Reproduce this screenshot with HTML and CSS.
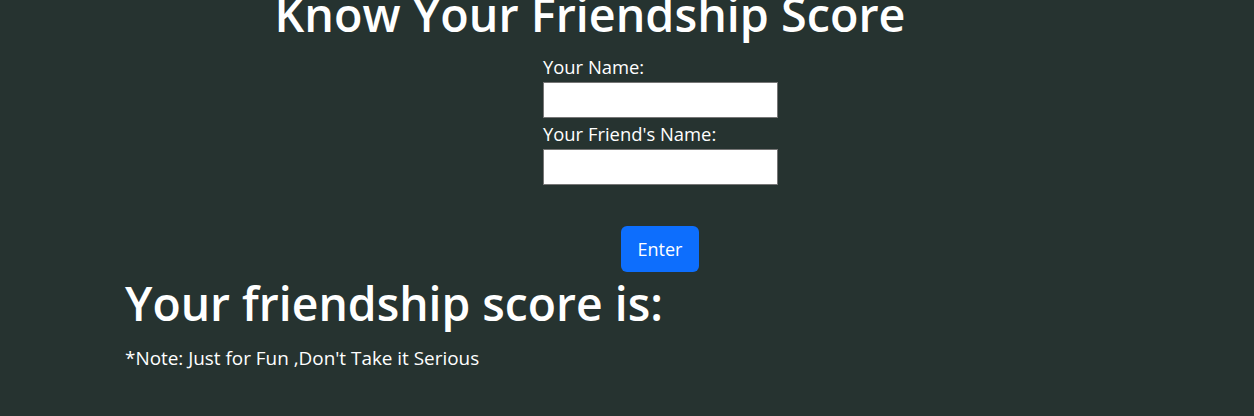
FILE: index.html
```html
<!DOCTYPE html>
<html>
<head>
<meta charset="utf-8">
<link rel="stylesheet" href="styles.css">
</head>
<body>
<div class="page">
  <h1 class="title">Know Your Friendship Score</h1>
  <form class="form">
    <label class="label" for="n1">Your Name:</label>
    <input class="field" id="n1" type="text">
    <label class="label" for="n2">Your Friend's Name:</label>
    <input class="field" id="n2" type="text">
    <div class="actions"><button class="btn" type="button">Enter</button></div>
  </form>
  <section class="result">
    <h2 class="score">Your friendship score is:</h2>
    <p class="note">*Note: Just for Fun ,Don't Take it Serious</p>
  </section>
</div>
</body>
</html>
```
FILE: styles.css
```css
html, body { margin: 0; padding: 0; }
body {
  background: #263330;
  color: #fff;
  font-family: "Open Sans", "Noto Sans", sans-serif;
  width: 1254px;
  height: 416px;
  overflow: hidden;
}
.page { display: flex; flex-direction: column; }
.title {
  margin: -14px 0 9px 0;
  width: 1180px;
  text-align: center;
  font-size: 46.7px;
  font-weight: 600;
  line-height: 56px;
}
.form {
  margin-left: 543px;
  width: 235px;
  display: flex;
  flex-direction: column;
}
.label { font-size: 18.4px; line-height: 31px; }
.field {
  box-sizing: border-box;
  width: 235px;
  height: 36px;
  border: 1px solid #767676;
  margin: 0;
  background: #fff;
}
.actions { display: flex; justify-content: center; margin-top: 41px; padding-right: 1px; }
.btn {
  width: 78px;
  height: 46px;
  background: #0d6efd;
  border: none;
  border-radius: 6px;
  color: #fff;
  font-family: inherit;
  font-size: 18px;
}
.result { margin-left: 125px; }
.score { margin: 2px 0 0; font-size: 46.3px; font-weight: 600; line-height: 60px; }
.note { margin: 11px 0 0; font-size: 18.9px; }
```
